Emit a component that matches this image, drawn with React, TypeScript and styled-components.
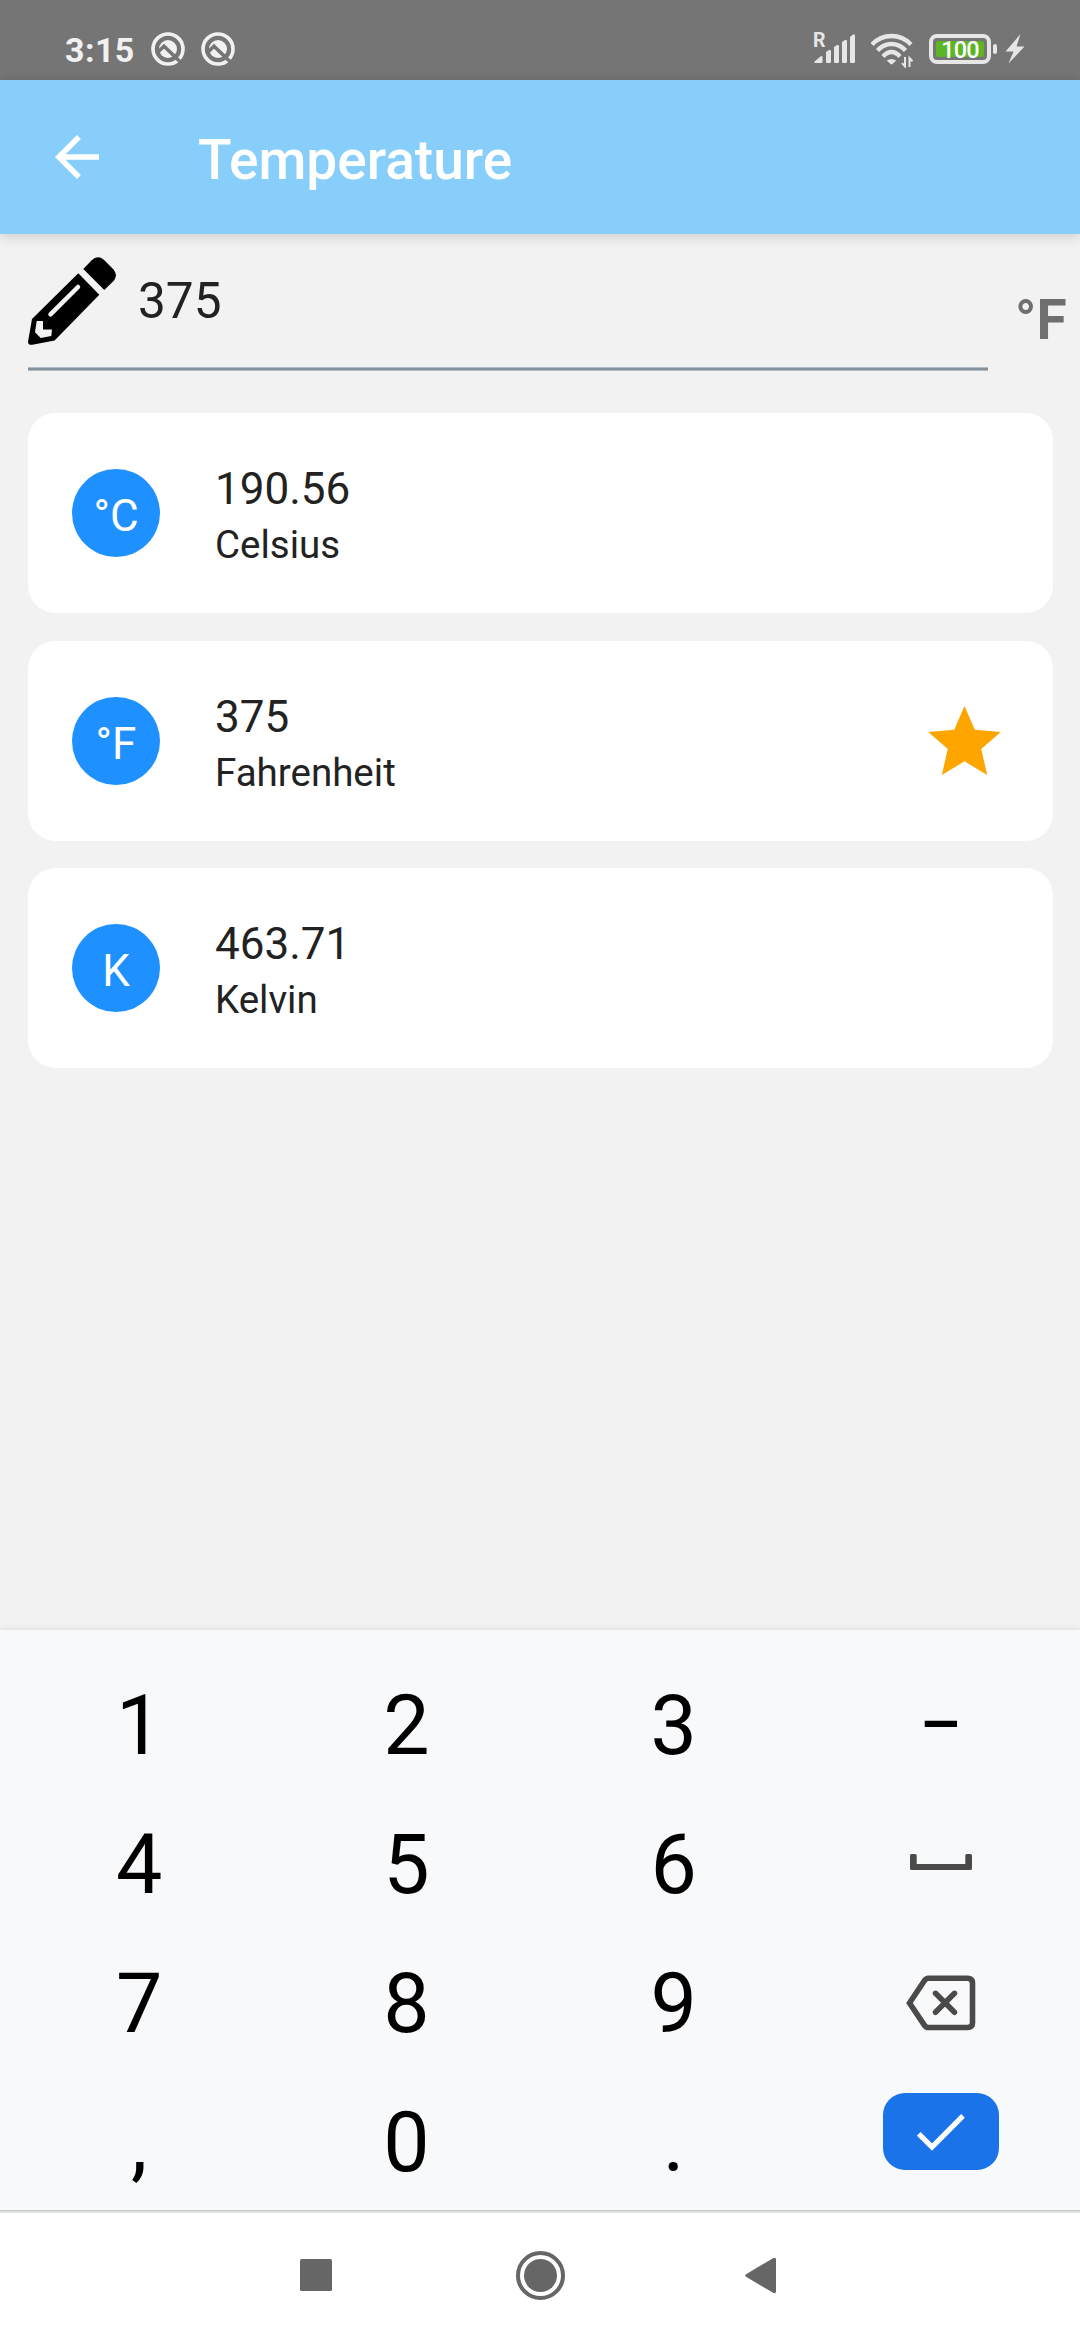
import React from "react";
import styled, { createGlobalStyle } from "styled-components";

const GlobalStyle = createGlobalStyle`
  * { box-sizing: border-box; }
  body { margin: 0; background: #f2f2f2; }
`;

const Screen = styled.div`
  width: 1080px;
  height: 2340px;
  display: flex;
  flex-direction: column;
  overflow: hidden;
  background: #f2f2f2;
  font-family: Roboto, "Noto Sans", sans-serif;
  color: #222;
`;

const StatusBar = styled.div`
  height: 80px;
  flex: none;
  display: flex;
  align-items: flex-start;
  justify-content: space-between;
  padding: 32px 55px 0 65px;
  background: #757575;
  color: #f1f1f1;
`;

const StatusGroup = styled.div<{ $gap: number }>`
  display: flex;
  align-items: flex-start;
  gap: ${(p) => p.$gap}px;
  svg { display: block; }
`;

const Clock = styled.span`
  width: 70px;
  font-size: 34px;
  line-height: 36px;
  font-weight: 700;
  letter-spacing: 0.4px;
`;

const Signal = styled.div`
  display: grid;
  width: 42px;
  height: 34px;
  margin-right: 14px;
  > * { grid-area: 1 / 1; }
`;

const Roaming = styled.span`
  margin-top: -4px;
  margin-left: -1px;
  font-size: 19.5px;
  line-height: 26px;
  font-weight: 700;
  color: #e6e6e6;
`;

const Battery = styled.div`
  display: flex;
  margin: 2px 0 0 16px;
`;

const BatteryShell = styled.div`
  width: 62px;
  height: 30px;
  padding: 3px;
  border: 4px solid #e6e6e6;
  border-radius: 8px;
`;

const BatteryFill = styled.div`
  height: 16px;
  border-radius: 2px;
  background: #5cb524;
  color: #fff;
  font-size: 23.5px;
  line-height: 19px;
  font-weight: 500;
  text-align: center;
  letter-spacing: -0.8px;
`;

const BatteryNub = styled.div`
  width: 4px;
  height: 10px;
  margin: 10px 8px 0 2px;
  border-radius: 2px;
  background: #e6e6e6;
`;

const Header = styled.header`
  height: 154px;
  flex: none;
  display: flex;
  align-items: center;
  padding-left: 44px;
  background: #87cefa;
  box-shadow: 0 2px 12px rgba(0, 0, 0, 0.18);
  z-index: 1;
`;

const BackButton = styled.div`
  width: 66px;
  height: 66px;
  margin-right: 88px;
  svg { display: block; }
`;

const Title = styled.h1`
  margin: 6px 0 0;
  font-size: 55px;
  line-height: 66px;
  font-weight: 500;
  color: #fff;
`;

const Main = styled.main`
  flex: 1;
  display: flex;
  flex-direction: column;
  padding: 23px 0 0 28px;
`;

const InputRow = styled.div`
  display: flex;
  height: 114px;
  margin-bottom: 42px;
`;

const Field = styled.div`
  width: 960px;
  display: flex;
  align-items: flex-start;
  gap: 19px;
  background: linear-gradient(#b0bbc5 1px, #86929b 1px, #86929b 3px, #b0bbc5 3px) bottom / 100% 4px no-repeat;
`;

const FieldValue = styled.span`
  font-size: 49.5px;
  line-height: 88px;
  color: #222;
`;

const Unit = styled.span`
  margin-left: 27px;
  padding-top: 30px;
  font-size: 55px;
  line-height: 66px;
  font-weight: 700;
  color: #6f6f6f;
`;

const CardList = styled.div`
  width: 1025px;
  display: flex;
  flex-direction: column;
  gap: 27.5px;
`;

const Card = styled.div`
  height: 200px;
  display: flex;
  align-items: center;
  padding: 0 52px 0 44px;
  border-radius: 27.5px;
  background: #fff;
`;

const Badge = styled.div`
  width: 88px;
  height: 88px;
  padding-top: 3px;
  border-radius: 50%;
  background: #1e90ff;
  color: #fff;
  font-size: 44px;
  line-height: 88px;
  text-align: center;
`;

const CardText = styled.div`
  flex: 1;
  margin-left: 55px;
  padding-top: 8px;
`;

const Amount = styled.div`
  font-size: 44px;
  line-height: 56px;
`;

const UnitName = styled.div`
  font-size: 38.5px;
  line-height: 56px;
`;

const Keyboard = styled.div`
  height: 583px;
  flex: none;
  display: grid;
  grid-template-columns: repeat(4, 1fr);
  grid-auto-rows: 139px;
  padding: 26px 5.5px 0;
  background: linear-gradient(#c5c8ca 1px, #e1e2e2 1px) bottom / 100% 3px no-repeat #f8f9fb;
  box-shadow: 0 0 8px rgba(0, 0, 0, 0.1);
`;

const Key = styled.div<{ $lift?: number }>`
  display: flex;
  align-items: center;
  justify-content: center;
  padding-bottom: ${(p) => p.$lift ?? 0}px;
  font-size: 82.5px;
  line-height: 139px;
  color: #000;
`;

const Dash = styled.span`
  transform: scaleX(0.8);
`;

const EnterKey = styled.div`
  width: 116px;
  height: 77px;
  display: flex;
  align-items: center;
  justify-content: center;
  border-radius: 22px;
  background: #1a73e8;
`;

const NavBar = styled.nav`
  height: 127px;
  flex: none;
  display: flex;
  align-items: flex-start;
  padding: 37px 0 0 300px;
  background: #fff;
`;

const Recents = styled.div`
  width: 32px;
  height: 32px;
  margin: 9px 184px 0 0;
  border-radius: 1.5px;
  background: #666;
`;

const HomeButton = styled.div`
  width: 49px;
  height: 49px;
  margin: 1px 180px 0 0;
  padding: 4px;
  border: 4px solid #666;
  border-radius: 50%;
`;

const HomeDot = styled.div`
  width: 33px;
  height: 33px;
  border-radius: 50%;
  background: #666;
`;

const BackSlot = styled.div`
  margin-top: 7px;
`;

const AppNotice = () => (
  <svg width="34" height="34" viewBox="0 0 34 34" fill="none">
    <circle cx="17" cy="17" r="15" stroke="#f1f1f1" strokeWidth="3.6" />
    <circle cx="17" cy="17" r="9" fill="#f1f1f1" />
    <path d="M7 20L13 14.200L30.500 31" stroke="#757575" strokeWidth="3.600" />
  </svg>
);

const SignalBars = () => (
  <svg width="42" height="34" viewBox="0 0 42 34" fill="#e6e6e6">
    <path d="M0.500 31V29.500L6.500 24.500Q8.500 23.500 8.500 25V30Q8.500 31 7.500 31Z" />
    <path d="M12 20L15 18Q17 17.500 17 19V30Q17 31 16 31H13Q12 31 12 30Z" />
    <path d="M20 15L23 13Q25 12.500 25 14V30Q25 31 24 31H21Q20 31 20 30Z" />
    <path d="M28 10L31 8Q33 7.500 33 9V30Q33 31 32 31H29Q28 31 28 30Z" />
    <path d="M36 5L39 2.500Q41 1.500 41 4V30Q41 31 40 31H37Q36 31 36 30Z" />
  </svg>
);

const WifiIcon = () => (
  <svg width="43" height="36" viewBox="0 0 43 36" fill="none" stroke="#e6e6e6">
    <path d="M2 12.500Q10 4 21.500 4T41 12.500" strokeWidth="4.300" />
    <path d="M7.500 18.500Q13.500 12 21.500 12T35.500 18.500" strokeWidth="4.300" />
    <path d="M13 24.500Q17 20 21.500 20T30 24.500" strokeWidth="4.300" />
    <path d="M16.800 28.500Q21.500 25.500 26.200 28.500L22.500 32Q21.500 32.800 20.500 32Z" fill="#e6e6e6" stroke="none" />
    <path d="M35 25V34.500L32 31.200M39.500 35V26L42.500 29.300" strokeWidth="2" />
  </svg>
);

const BoltIcon = () => (
  <svg width="20" height="32" viewBox="0 0 20 32" fill="#e6e6e6">
    <path d="M15.500 2L0.500 19.500H8.500L3.500 31.500L19.500 14.500H11.500Z" />
  </svg>
);

const BackArrow = () => (
  <svg width="66" height="66" viewBox="0 0 24 24" fill="#fff">
    <path d="M20 11H7.830l5.590-5.590L12 4l-8 8 8 8 1.410-1.410L7.830 13H20v-2z" />
  </svg>
);

const Pencil = () => (
  <svg width="91" height="88" viewBox="0 0 91 88">
    <path d="M55.300 12L63.700 3.300Q69.500 -2.300 75.800 2.800L85.300 12.300Q90.300 18 85.800 23.700L76.300 33Z" />
    <path d="M50.300 16.300L71.300 37.700L26.600 83.400L4.300 87.700Q0 88.500 0 84.700L4 62Z" />
    <path d="M50 30L22.500 57.300" stroke="#f2f2f2" strokeWidth="4.500" strokeLinecap="round" />
    <path d="M8.700 64H15V72.500H24L23.300 79L12.700 81L7 75.300Z" fill="#f2f2f2" />
  </svg>
);

const Star = () => (
  <svg width="73" height="70" viewBox="0 0 73 70" fill="#ffa500">
    <path d="M36.500 0L46.800 23.700L72.800 26L53.200 43L59.200 69L36.500 55.300L13.800 69L19.800 43L0.200 26L26.200 23.700Z" />
  </svg>
);

const SpaceIcon = () => (
  <svg width="62" height="16" viewBox="0 0 62 16" fill="#4a4a4a">
    <path d="M1.500 0H5.200Q6.700 0 6.700 1.500V10H55.300V1.500Q55.300 0 56.800 0H60.500Q62 0 62 1.500V14.500Q62 16 60.500 16H1.500Q0 16 0 14.500V1.500Q0 0 1.500 0Z" />
  </svg>
);

const BackspaceIcon = () => (
  <svg width="70" height="56" viewBox="0 0 70 56" fill="none" stroke="#4a4a4a">
    <path d="M3.500 28L18.500 5.500Q20 3.200 22.500 3.200H61.500Q66.500 3.200 66.500 8V48Q66.500 52.500 61.500 52.500H22.500Q20 52.500 18.500 50.300Z" strokeWidth="5.600" />
    <path d="M29.500 18.300L48.500 37.300M48.500 18.300L29.500 37.300" strokeWidth="5.500" strokeLinecap="round" />
  </svg>
);

const CheckIcon = () => (
  <svg width="48" height="38" viewBox="0 0 48 38" fill="none" stroke="#fff" strokeWidth="5.200">
    <path d="M1.800 20.800L15 34L46 2.800" />
  </svg>
);

const BackTriangle = () => (
  <svg width="32" height="38" viewBox="0 0 32 38" fill="#666">
    <path d="M1 17.200L28.500 1Q31 0 31 2.500V34.500Q31 37 28.500 36L1 19.800Q-0.500 18.500 1 17.200Z" />
  </svg>
);

const readings = [
  { symbol: "°C", amount: "190.56", name: "Celsius", favourite: false },
  { symbol: "°F", amount: "375", name: "Fahrenheit", favourite: true },
  { symbol: "K", amount: "463.71", name: "Kelvin", favourite: false },
];

const keys: { id: string; face: React.ReactNode; lift?: number }[] = [
  { id: "1", face: "1" },
  { id: "2", face: "2" },
  { id: "3", face: "3" },
  { id: "minus", face: <Dash>–</Dash> },
  { id: "4", face: "4" },
  { id: "5", face: "5" },
  { id: "6", face: "6" },
  { id: "space", face: <SpaceIcon />, lift: 5 },
  { id: "7", face: "7" },
  { id: "8", face: "8" },
  { id: "9", face: "9" },
  { id: "delete", face: <BackspaceIcon />, lift: 2 },
  { id: "comma", face: "," },
  { id: "0", face: "0" },
  { id: "dot", face: "." },
  { id: "enter", face: <EnterKey><CheckIcon /></EnterKey>, lift: 22 },
];

export default function App() {
  return (
    <Screen>
      <GlobalStyle />
      <StatusBar>
        <StatusGroup $gap={16}>
          <Clock>3:15</Clock>
          <AppNotice />
          <AppNotice />
        </StatusGroup>
        <StatusGroup $gap={0}>
          <Signal>
            <SignalBars />
            <Roaming>R</Roaming>
          </Signal>
          <WifiIcon />
          <Battery>
            <BatteryShell><BatteryFill>100</BatteryFill></BatteryShell>
            <BatteryNub />
          </Battery>
          <BoltIcon />
        </StatusGroup>
      </StatusBar>
      <Header>
        <BackButton><BackArrow /></BackButton>
        <Title>Temperature</Title>
      </Header>
      <Main>
        <InputRow>
          <Field>
            <Pencil />
            <FieldValue>375</FieldValue>
          </Field>
          <Unit>°F</Unit>
        </InputRow>
        <CardList>
          {readings.map((r) => (
            <Card key={r.name}>
              <Badge>{r.symbol}</Badge>
              <CardText>
                <Amount>{r.amount}</Amount>
                <UnitName>{r.name}</UnitName>
              </CardText>
              {r.favourite && <Star />}
            </Card>
          ))}
        </CardList>
      </Main>
      <Keyboard>
        {keys.map((k) => (
          <Key key={k.id} $lift={k.lift}>{k.face}</Key>
        ))}
      </Keyboard>
      <NavBar>
        <Recents />
        <HomeButton><HomeDot /></HomeButton>
        <BackSlot><BackTriangle /></BackSlot>
      </NavBar>
    </Screen>
  );
}
